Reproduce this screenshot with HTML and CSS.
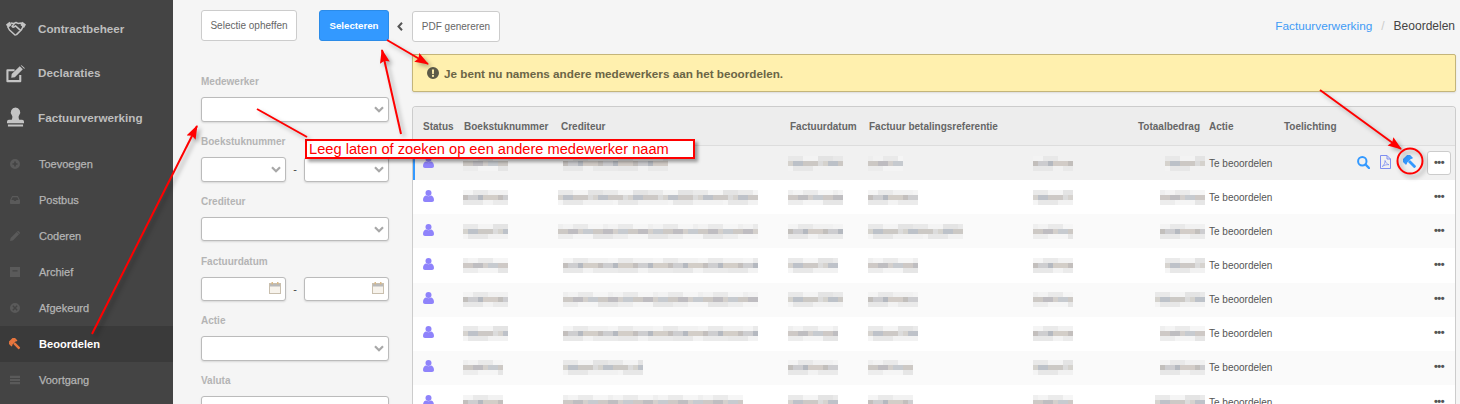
FILE: index.html
```html
<!DOCTYPE html>
<html lang="nl">
<head>
<meta charset="utf-8">
<title>Beoordelen</title>
<link rel="stylesheet" href="styles.css">
</head>
<body>
<svg class="defs" width="0" height="0" aria-hidden="true">
  <symbol id="i-hand" viewBox="0 0 20 15">
    <path d="M0 3.500 3.600.8l2 3.200L2 7zM20 3.500 16.400.8l-2 3.200L18 7z" fill="currentColor"/>
    <path d="M4.500 2 8 2.400 10 1.500l2 .9 3.500-.4 1.500 3.600-1.500 3-5 5-1.500.4-5.500-5L1.800 6M8.500 2.400 6 5.500c1 1 2.400.5 3.500-.6l5.500 5" fill="none" stroke="currentColor" stroke-width="1.500" stroke-linejoin="round"/>
  </symbol>
  <symbol id="i-edit" viewBox="0 0 20 18">
    <path d="M15 10v6.500H1.500V5H9" fill="none" stroke="currentColor" stroke-width="2.200" stroke-linejoin="round"/>
    <path d="M6 9 14.500.8l3.200 3.200-8.400 8.400L5.500 13zM15.500 0a1 1 0 0 1 1.200 0L19.400 2.500a1 1 0 0 1 0 1.200L18.500 3z" fill="currentColor"/>
  </symbol>
  <symbol id="i-stamp" viewBox="0 0 18 20">
    <path d="M9 0a5 5 0 0 1 4 8c-1.300 2-.5 3.500 0 5h3a2 2 0 0 1 2 2v1.500H0V15a2 2 0 0 1 2-2h3c.5-1.500 1.300-3 0-5A5 5 0 0 1 9 0zM1 18h16v2H1z" fill="currentColor"/>
  </symbol>
  <symbol id="i-plus" viewBox="0 0 12 12">
    <path fill-rule="evenodd" d="M6 0a6 6 0 1 1 0 12A6 6 0 0 1 6 0zM5 3v2H3v2h2v2h2V7h2V5H7V3z" fill="currentColor"/>
  </symbol>
  <symbol id="i-inbox" viewBox="0 0 14 11">
    <path fill-rule="evenodd" d="M3 0h8l3 6v4a1 1 0 0 1-1 1H1a1 1 0 0 1-1-1V6zM3.800 1.500 2 5.500h3l1 1.500h2l1-1.500h3l-1.800-4z" fill="currentColor"/>
  </symbol>
  <symbol id="i-pencil" viewBox="0 0 12 12">
    <path d="M0 12l.7-3.500L8 1.200l2.800 2.800-7.300 7.300zM8.800.4c.5-.5 1.200-.5 1.700 0l1.100 1.100c.5.500.5 1.200 0 1.700l-.4.400L8.400.8z" fill="currentColor"/>
  </symbol>
  <symbol id="i-archive" viewBox="0 0 12 12">
    <path fill-rule="evenodd" d="M0 0h12v12H0zM3 4v1.500h6V4z" fill="currentColor"/>
  </symbol>
  <symbol id="i-times" viewBox="0 0 12 12">
    <path fill-rule="evenodd" d="M6 0a6 6 0 1 1 0 12A6 6 0 0 1 6 0zM4 2.800 2.800 4l2 2-2 2L4 9.200l2-2 2 2L9.200 8l-2-2 2-2L8 2.800l-2 2z" fill="currentColor"/>
  </symbol>
  <symbol id="i-gavel" viewBox="0 0 14 14">
    <g transform="rotate(-45 7 7)" fill="currentColor">
      <rect x="3.200" y="0" width="7.600" height="5.500" rx=".5"/>
      <rect x="2" y="-.8" width="1.800" height="7" rx=".5"/>
      <rect x="10.200" y="-.8" width="1.800" height="7" rx=".5"/>
      <rect x="5.600" y="5.500" width="2.800" height="9" rx=".8"/>
    </g>
  </symbol>
  <symbol id="i-tasks" viewBox="0 0 12 10">
    <path fill-rule="evenodd" d="M0 0h12v2.500H0zM0 3.700h12v2.500H0zM0 7.400h12V10H0z" fill="currentColor"/>
  </symbol>
  <symbol id="i-chev" viewBox="0 0 10 7">
    <path d="M1 1.200 5 5.200l4-4" fill="none" stroke="currentColor" stroke-width="2.200"/>
  </symbol>
  <symbol id="i-back" viewBox="0 0 6 9">
    <path d="M5 .8 1.500 4.500 5 8.200" fill="none" stroke="currentColor" stroke-width="2"/>
  </symbol>
  <symbol id="i-cal" viewBox="0 0 12 12">
    <rect x=".5" y="1.500" width="11" height="10" fill="#f7f3ec" stroke="#c9bfae"/>
    <rect x="1" y="2" width="10" height="2.500" fill="#b9b9b9"/>
    <rect x="2.500" y="0" width="1.500" height="2.500" fill="#d8b98a"/>
    <rect x="8" y="0" width="1.500" height="2.500" fill="#d8b98a"/>
  </symbol>
  <symbol id="i-user" viewBox="0 0 11 12">
    <circle cx="5.500" cy="3" r="3" fill="currentColor"/>
    <path d="M0 10c0-3 1.800-4.500 3-4.500.8.500 1.500.7 2.500.7s1.700-.2 2.500-.7C9.200 5.500 11 7 11 10c0 1.300-.8 2-2 2H2c-1.200 0-2-.7-2-2z" fill="currentColor"/>
  </symbol>
  <symbol id="i-search" viewBox="0 0 13 13">
    <circle cx="5.300" cy="5.300" r="4.200" fill="none" stroke="currentColor" stroke-width="2"/>
    <path d="M8.500 8.500 12 12" stroke="currentColor" stroke-width="2.400" stroke-linecap="round"/>
  </symbol>
  <symbol id="i-pdf" viewBox="0 0 11 14">
    <path d="M.5.500h6.500l3.500 3.500v9.500H.5zM7 .5V4h3.500" fill="none" stroke="currentColor"/>
    <path d="M2.200 11.500c2-1.200 3-4 2.800-6 1 2.500 2.200 3.800 4 4.200-2-.2-4.500.2-6.800 1.800z" fill="none" stroke="currentColor" stroke-width=".8"/>
  </symbol>
  <symbol id="i-excl" viewBox="0 0 12 12">
    <path fill-rule="evenodd" d="M6 0a6 6 0 1 1 0 12A6 6 0 0 1 6 0zM4.900 2.500l.3 4.500h1.600l.3-4.500zM6 7.800a1.100 1.100 0 1 0 0 2.200 1.100 1.100 0 0 0 0-2.200z" fill="currentColor"/>
  </symbol>
</svg>

<div class="app">
  <nav class="sidebar">
    <a class="nav-main"><svg class="ico-main ico-hand"><use href="#i-hand"/></svg>Contractbeheer</a>
    <a class="nav-main"><svg class="ico-main ico-edit"><use href="#i-edit"/></svg>Declaraties</a>
    <a class="nav-main"><svg class="ico-main ico-stamp"><use href="#i-stamp"/></svg>Factuurverwerking</a>
    <div class="subnav">
      <a class="nav-sub"><svg class="ico-sub"><use href="#i-plus"/></svg>Toevoegen</a>
      <a class="nav-sub"><svg class="ico-sub"><use href="#i-inbox"/></svg>Postbus</a>
      <a class="nav-sub"><svg class="ico-sub"><use href="#i-pencil"/></svg>Coderen</a>
      <a class="nav-sub"><svg class="ico-sub"><use href="#i-archive"/></svg>Archief</a>
      <a class="nav-sub"><svg class="ico-sub"><use href="#i-times"/></svg>Afgekeurd</a>
      <a class="nav-sub is-active"><svg class="ico-sub"><use href="#i-gavel"/></svg>Beoordelen</a>
      <a class="nav-sub"><svg class="ico-sub"><use href="#i-tasks"/></svg>Voortgang</a>
    </div>
  </nav>

  <aside class="filters">
    <div class="filter-actions">
      <button class="btn btn-clear">Selectie opheffen</button>
      <button class="btn btn-primary">Selecteren</button>
    </div>
    <div class="field">
      <label class="field-label">Medewerker</label>
      <div class="control"><svg class="chev"><use href="#i-chev"/></svg></div>
    </div>
    <div class="field">
      <label class="field-label">Boekstuknummer</label>
      <div class="range">
        <div class="control"><svg class="chev"><use href="#i-chev"/></svg></div>
        <span class="dash">-</span>
        <div class="control"><svg class="chev"><use href="#i-chev"/></svg></div>
      </div>
    </div>
    <div class="field">
      <label class="field-label">Crediteur</label>
      <div class="control"><svg class="chev"><use href="#i-chev"/></svg></div>
    </div>
    <div class="field">
      <label class="field-label">Factuurdatum</label>
      <div class="range">
        <div class="control"><svg class="cal"><use href="#i-cal"/></svg></div>
        <span class="dash">-</span>
        <div class="control"><svg class="cal"><use href="#i-cal"/></svg></div>
      </div>
    </div>
    <div class="field">
      <label class="field-label">Actie</label>
      <div class="control"><svg class="chev"><use href="#i-chev"/></svg></div>
    </div>
    <div class="field">
      <label class="field-label">Valuta</label>
      <div class="control"><svg class="chev"><use href="#i-chev"/></svg></div>
    </div>
  </aside>

  <main class="content">
    <div class="topbar">
      <svg class="collapse"><use href="#i-back"/></svg>
      <button class="btn btn-pdf">PDF genereren</button>
      <div class="crumbs">
        <a class="crumb-link">Factuurverwerking</a><span class="crumb-sep">/</span><span class="crumb-current">Beoordelen</span>
      </div>
    </div>
    <div class="alert"><svg class="alert-ico"><use href="#i-excl"/></svg>Je bent nu namens andere medewerkers aan het beoordelen.</div>

    <section class="panel">
      <div class="grid head">
        <span>Status</span>
        <span class="h-b">Boekstuknummer</span>
        <span class="h-c">Crediteur</span>
        <span class="h-f">Factuurdatum</span>
        <span class="h-r">Factuur betalingsreferentie</span>
        <span></span>
        <span class="h-t">Totaalbedrag</span>
        <span></span>
        <span>Actie</span>
        <span>Toelichting</span>
      </div>

      <div class="grid row is-selected">
        <svg class="user"><use href="#i-user"/></svg>
        <i class="smear s1" style="width:45px"></i>
        <i class="smear s2 in5" style="width:105px"></i>
        <i class="smear s3" style="width:55px"></i>
        <i class="smear s1" style="width:35px"></i>
        <i class="smear s2" style="width:40px"></i>
        <i class="smear s3 end" style="width:40px"></i>
        <span></span>
        <span class="state">Te beoordelen</span>
        <span class="row-actions">
          <svg class="act act-search"><use href="#i-search"/></svg>
          <svg class="act act-pdf"><use href="#i-pdf"/></svg>
          <svg class="act act-gavel"><use href="#i-gavel"/></svg>
          <span class="more more-btn">•••</span>
        </span>
      </div>

      <div class="grid row">
        <svg class="user"><use href="#i-user"/></svg>
        <i class="smear s2" style="width:45px"></i>
        <i class="smear s3" style="width:200px"></i>
        <i class="smear s1" style="width:55px"></i>
        <i class="smear s2" style="width:50px"></i>
        <i class="smear s3" style="width:40px"></i>
        <i class="smear s1 end" style="width:45px"></i>
        <span></span>
        <span class="state">Te beoordelen</span>
        <span class="row-actions"><span class="more">•••</span></span>
      </div>

      <div class="grid row">
        <svg class="user"><use href="#i-user"/></svg>
        <i class="smear s3" style="width:45px"></i>
        <i class="smear s1" style="width:200px"></i>
        <i class="smear s2" style="width:55px"></i>
        <i class="smear s3" style="width:95px"></i>
        <i class="smear s1" style="width:40px"></i>
        <i class="smear s2 end" style="width:45px"></i>
        <span></span>
        <span class="state">Te beoordelen</span>
        <span class="row-actions"><span class="more">•••</span></span>
      </div>

      <div class="grid row">
        <svg class="user"><use href="#i-user"/></svg>
        <i class="smear s1" style="width:45px"></i>
        <i class="smear s2 in5" style="width:195px"></i>
        <i class="smear s3" style="width:50px"></i>
        <i class="smear s1" style="width:50px"></i>
        <i class="smear s2" style="width:40px"></i>
        <i class="smear s3 end" style="width:40px"></i>
        <span></span>
        <span class="state">Te beoordelen</span>
        <span class="row-actions"><span class="more">•••</span></span>
      </div>

      <div class="grid row">
        <svg class="user"><use href="#i-user"/></svg>
        <i class="smear s2" style="width:45px"></i>
        <i class="smear s1 in5" style="width:195px"></i>
        <i class="smear s3" style="width:55px"></i>
        <i class="smear s2" style="width:50px"></i>
        <i class="smear s1" style="width:40px"></i>
        <i class="smear s3 end" style="width:50px"></i>
        <span></span>
        <span class="state">Te beoordelen</span>
        <span class="row-actions"><span class="more">•••</span></span>
      </div>

      <div class="grid row">
        <svg class="user"><use href="#i-user"/></svg>
        <i class="smear s3" style="width:45px"></i>
        <i class="smear s2 in5" style="width:195px"></i>
        <i class="smear s1" style="width:50px"></i>
        <i class="smear s3" style="width:50px"></i>
        <i class="smear s2" style="width:40px"></i>
        <i class="smear s1 end" style="width:45px"></i>
        <span></span>
        <span class="state">Te beoordelen</span>
        <span class="row-actions"><span class="more">•••</span></span>
      </div>

      <div class="grid row">
        <svg class="user"><use href="#i-user"/></svg>
        <i class="smear s1" style="width:40px"></i>
        <i class="smear s3 in5" style="width:80px"></i>
        <i class="smear s2" style="width:50px"></i>
        <i class="smear s1" style="width:45px"></i>
        <i class="smear s3" style="width:40px"></i>
        <i class="smear s2 end" style="width:45px"></i>
        <span></span>
        <span class="state">Te beoordelen</span>
        <span class="row-actions"><span class="more">•••</span></span>
      </div>

      <div class="grid row">
        <svg class="user"><use href="#i-user"/></svg>
        <i class="smear s2" style="width:40px"></i>
        <i class="smear s1 in5" style="width:180px"></i>
        <i class="smear s3" style="width:50px"></i>
        <i class="smear s2" style="width:45px"></i>
        <i class="smear s1" style="width:40px"></i>
        <i class="smear s3 end" style="width:50px"></i>
        <span></span>
        <span class="state">Te beoordelen</span>
        <span class="row-actions"><span class="more">•••</span></span>
      </div>
    </section>
  </main>
</div>

<div class="note">Leeg laten of zoeken op een andere medewerker naam</div>
<svg class="marks" width="1460" height="404" viewBox="0 0 1460 404" aria-hidden="true">
  <defs>
    <marker id="head" markerUnits="userSpaceOnUse" markerWidth="14" markerHeight="12" refX="13" refY="5" orient="auto">
      <path d="M0 0 14 5 0 10 2 5z" fill="#f00"/>
    </marker>
  </defs>
  <g fill="none" stroke="#f00" stroke-width="2">
    <path d="M92 334 197 126" marker-end="url(#head)"/>
    <path d="M257 109 307 137"/>
    <path d="M401 134 382 50" marker-end="url(#head)"/>
    <path d="M387 40 428 64" marker-end="url(#head)"/>
    <path d="M1320 90 1401 149" marker-end="url(#head)"/>
    <circle cx="1410" cy="161" r="12.500"/>
  </g>
</svg>
</body>
</html>
```
FILE: styles.css
```css
* { box-sizing: border-box; }
html, body { margin: 0; height: 404px; overflow: hidden; }
body {
  position: relative;
  background: #f5f5f5;
  font-family: "Liberation Sans", Arial, sans-serif;
  font-size: 12px;
  color: #555;
}
.defs { position: absolute; }
.app { display: flex; height: 404px; overflow: hidden; }

/* Sidebar */
.sidebar { flex: 0 0 173px; background: #444; padding-top: 6px; }
.nav-main {
  display: flex; align-items: center; height: 44.500px;
  color: #bdbdbd; font-size: 11.700px; font-weight: bold;
  padding-left: 38px; position: relative;
}
.ico-main { position: absolute; color: #c4c4c4; }
.ico-hand { left: 6px; top: 15px; width: 20px; height: 15px; }
.ico-edit { left: 6px; top: 14px; width: 19px; height: 18px; }
.ico-stamp { left: 7px; top: 12px; width: 17px; height: 20px; }
.subnav { margin-top: 6.500px; }
.nav-sub {
  display: flex; align-items: center; height: 36px;
  color: #b4b4b4; font-size: 11px;
  -webkit-text-stroke: .25px #b4b4b4;
  padding-left: 39px; position: relative;
}
.ico-sub { position: absolute; left: 10px; top: 13px; width: 10px; height: 10px; color: #5a5a5a; }
.nav-sub.is-active { background: #3a3a3a; color: #fff; font-weight: bold; font-size: 11.100px; -webkit-text-stroke: 0; }
.nav-sub.is-active .ico-sub { color: #e8763e; left: 9px; top: 12px; width: 12px; height: 12px; }

/* Filters */
.filters { flex: 0 0 239px; padding: 10px 23px 0 28px; }
.filter-actions { display: flex; justify-content: space-between; margin-bottom: 33.300px; }
.btn {
  height: 31px; padding: 0;
  font: 10px "Liberation Sans", Arial, sans-serif;
  color: #666; background: #fff;
  border: 1px solid #ccc; border-radius: 3px;
}
.btn-clear { width: 96px; }
.btn-pdf { width: 88px; }
.btn-primary { background: #3399ff; border-color: #2b8be8; color: #fff; font-weight: bold; font-size: 9.700px; width: 70px; }
.field { margin-bottom: 12.300px; }
.field-label { display: block; height: 23px; font-size: 10px; font-weight: bold; color: #b4b4b4; padding-top: 2px; }
.control {
  position: relative; flex: 1; height: 24.500px; background: #fff;
  border: 1px solid #bbb; border-radius: 3px;
  box-shadow: 0 1px 2px rgba(0,0,0,.12);
}
.chev { position: absolute; right: 4px; top: 8px; width: 10px; height: 7px; color: #a8a8a8; }
.cal { position: absolute; right: 4px; top: 4px; width: 12px; height: 12px; }
.range { display: flex; align-items: center; }
.dash { width: 18px; text-align: center; color: #444; font-size: 11px; }

/* Main */
.content { flex: 1; min-width: 0; padding: 0 4px 0 0; }
.topbar { display: flex; align-items: center; height: 54px; padding-bottom: 2px; position: relative; }
.collapse { position: absolute; left: -15px; top: 22px; width: 6px; height: 9px; color: #555; }
.crumbs { margin-left: auto; display: flex; align-items: baseline; margin-right: 1px; }
.crumb-link { color: #3f9bf5; font-size: 11.800px; }
.crumb-sep { color: #ccc; margin: 0 9px; }
.crumb-current { color: #444; font-size: 12px; }
.alert {
  display: flex; align-items: center; height: 38px; padding-left: 14px;
  background: #fff0ae; border: 1px solid #c4b57a; border-radius: 2px;
  font-size: 11.700px; font-weight: bold; color: #6b6546;
  box-shadow: 0 1px 2px rgba(0,0,0,.1);
}
.alert-ico { width: 12px; height: 12px; margin-right: 5px; color: #5c5a48; }
.panel {
  margin-top: 14px; background: #fff; border: 1px solid #ccc; border-bottom: 0;
  border-radius: 4px 4px 0 0; overflow: hidden;
}
.grid {
  display: grid; align-items: center; padding-left: 10px;
  grid-template-columns: 40px 95px 230px 80px 165px 85px 85px 6px 75px 1fr;
}
.head { height: 39px; background: #ededed; border-bottom: 1px solid #ddd; font-size: 10px; font-weight: bold; color: #666; }
.h-b { margin-left: 1px; }
.h-c { margin-left: 3px; }
.h-f { margin-left: 2px; }
.h-r { margin-left: 1px; white-space: nowrap; }
.h-t { text-align: right; margin-right: 3px; }
.row { height: 34.150px; background: #fafafa; position: relative; }
.row:nth-child(odd) { background: #fff; }
.row.is-selected { background: #f1f1f1; box-shadow: inset 2px 0 0 #3399ff; }
.user { width: 11px; height: 12px; color: #8f83fb; margin-top: -3px; }
.smear {
  display: block; height: 15px; opacity: .9;
  background-repeat: repeat-x;
  background-size: 45px 5px, 35px 5px, 55px 5px;
  background-position: 0 0, 0 5px, 0 10px;
}
.s1 { background-image:
  linear-gradient(90deg,#eee 0 5px,#f3f3f3 5px 15px,#e9e9e9 15px 30px,#f6f6f6 30px),
  linear-gradient(90deg,#c9c4c0 0 10px,#b9b7bb 10px 20px,#d0ccc8 20px 25px,#c2c6cc 25px),
  linear-gradient(90deg,#ececec 0 15px,#f5f5f5 15px 35px,#e4e4e4 35px); }
.s2 { background-image:
  linear-gradient(90deg,#f4f4f4 0 10px,#e8e8e8 10px 25px,#f1f1f1 25px),
  linear-gradient(90deg,#bdb9b6 0 5px,#c9c9cc 5px 15px,#aeb2ba 15px 20px,#cfc9c3 20px),
  linear-gradient(90deg,#e6e6e6 0 20px,#f2f2f2 20px 30px,#e9e9e9 30px); }
.s3 { background-image:
  linear-gradient(90deg,#e8e8e8 0 15px,#f4f4f4 15px 30px,#e2e2e2 30px),
  linear-gradient(90deg,#d2cfca 0 5px,#b7bcc4 5px 15px,#c8c4c0 15px 30px,#d9d9d9 30px),
  linear-gradient(90deg,#f4f4f4 0 5px,#e6e6e6 5px 25px,#f1f1f1 25px); }
.in5 { margin-left: 5px; }
.end { justify-self: end; margin-right: -2px; }
.state { font-size: 10px; color: #555; white-space: nowrap; }
.row-actions { display: flex; align-items: center; justify-content: flex-end; margin-right: 4px; position: relative; height: 100%; }
.act { position: absolute; color: #3399ff; }
.act-search { right: 81px; top: 10px; width: 13px; height: 13px; }
.act-pdf { right: 60px; top: 9px; width: 11px; height: 14px; color: #7f8ff0; }
.act-gavel { right: 34px; top: 9px; width: 14px; height: 14px; }
.more { width: 24px; text-align: center; font-size: 11px; letter-spacing: -.5px; line-height: 10px; font-weight: bold; color: #555; margin-top: -3px; white-space: nowrap; }
.more-btn { height: 24px; line-height: 20px; margin-top: 0; background: #fff; border: 1px solid #ccc; border-radius: 3px; }

/* Annotations */
.note {
  position: absolute; left: 305px; top: 139px; width: 390px; height: 20px;
  background: #fff; border: 2px solid #f00; color: #f00;
  font-size: 14.650px; line-height: 16px; padding-left: 2px; white-space: nowrap;
  box-shadow: 3px 3px 3px rgba(0,0,0,.35);
}
.marks { position: absolute; left: 0; top: 0; pointer-events: none; filter: drop-shadow(3px 3px 2px rgba(0,0,0,.3)); }
```
